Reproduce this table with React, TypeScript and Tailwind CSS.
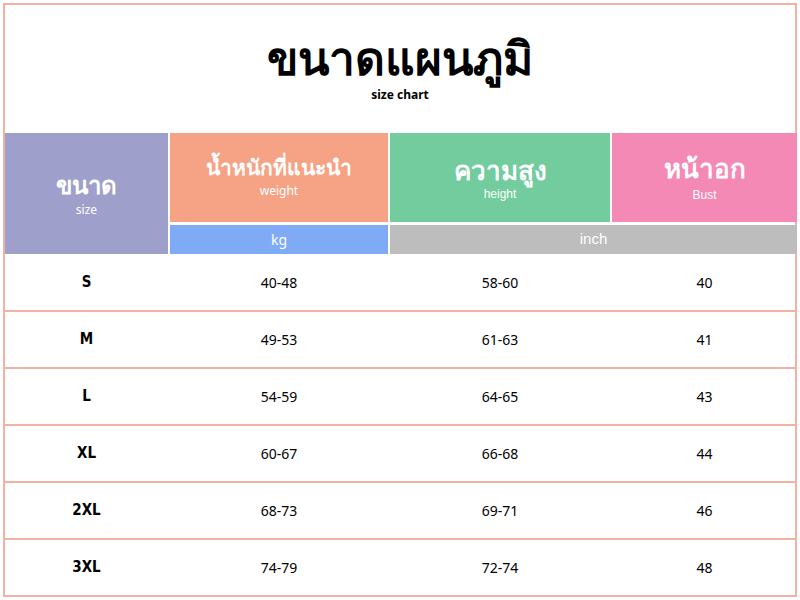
const rows = [
  { size: "S", weight: "40-48", height: "58-60", bust: "40" },
  { size: "M", weight: "49-53", height: "61-63", bust: "41" },
  { size: "L", weight: "54-59", height: "64-65", bust: "43" },
  { size: "XL", weight: "60-67", height: "66-68", bust: "44" },
  { size: "2XL", weight: "68-73", height: "69-71", bust: "46" },
  { size: "3XL", weight: "74-79", height: "72-74", bust: "48" },
];

const cols = "grid grid-cols-[163px_218px_220px_185px] gap-x-[2px]";

export default function App() {
  return (
    <div className="h-[600px] w-[800px] bg-white p-[3px] font-['Noto_Sans','DejaVu_Sans',sans-serif]">
      <div className="flex h-full flex-col border-2 border-[#f2b2a2]">
        <div className="flex h-[128px] flex-col items-center pt-[27px]">
          <h1 className="text-[46px] font-bold leading-[50px] text-black">ขนาดแผนภูมิ</h1>
          <div className="mt-[6px] text-[12px] font-bold leading-[14px] text-black">size chart</div>
        </div>

        <div className={`${cols} grid-rows-[89px_29px] gap-y-[3px] text-white`}>
          <div className="row-span-2 flex flex-col items-center justify-center gap-[3px] bg-[#9f9fcb] pt-[2px]">
            <div className="text-[24px] font-bold leading-7">ขนาด</div>
            <div className="text-[12px] leading-4">size</div>
          </div>
          <div className="flex flex-col items-center justify-center gap-[2px] bg-[#f6a385] pb-[4px]">
            <div className="text-[21px] font-bold leading-7">น้ำหนักที่แนะนำ</div>
            <div className="text-[12px] leading-4">weight</div>
          </div>
          <div className="flex flex-col items-center justify-center bg-[#72cc9d]">
            <div className="text-[26px] font-bold leading-8">ความสูง</div>
            <div className="font-['Liberation_Sans',sans-serif] text-[12px] leading-4">height</div>
          </div>
          <div className="flex flex-col items-center justify-center gap-[3px] bg-[#f589b6]">
            <div className="text-[26px] font-bold leading-8">หน้าอก</div>
            <div className="font-['Liberation_Sans',sans-serif] text-[12px] leading-4">Bust</div>
          </div>
          <div className="flex items-center justify-center bg-[#7fabf6] text-[14px]">kg</div>
          <div className="col-span-2 flex items-center justify-center bg-[#bdbdbd] font-['Liberation_Sans',sans-serif] text-[15px]">
            inch
          </div>
        </div>

        <div className="flex flex-1 flex-col divide-y-2 divide-[#f2b2a2] pt-[1px]">
          {rows.map((r) => (
            <div key={r.size} className={`${cols} flex-1 items-center text-center text-black`}>
              <div className="font-['DejaVu_Sans_Condensed','Liberation_Sans_Narrow',sans-serif] text-[15px] font-bold">
                {r.size}
              </div>
              <div className="text-[14px]">{r.weight}</div>
              <div className="text-[14px]">{r.height}</div>
              <div className="text-[14px]">{r.bust}</div>
            </div>
          ))}
        </div>
      </div>
    </div>
  );
}
